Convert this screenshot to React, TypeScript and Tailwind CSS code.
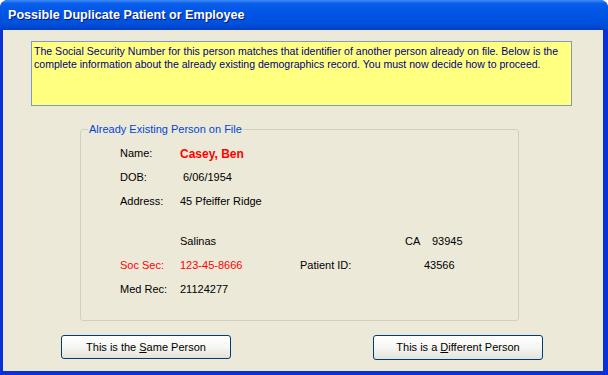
export default function App() {
  const font = "font-['Liberation_Sans',Arial,sans-serif]";

  return (
    <div className={`w-[608px] h-[375px] flex flex-col rounded-t-[8px] bg-[#0831D9] overflow-hidden ${font}`}>
      {/* title bar */}
      <div className="h-[30px] shrink-0 flex items-center pl-[8px] bg-[linear-gradient(180deg,#3D8CF9_0%,#0A5DEA_12%,#0055E5_45%,#0050DC_80%,#003FC4_100%)]">
        <span className="text-white font-bold text-[12.6px] [text-shadow:1px_1px_0_#0A1883]">
          Possible Duplicate Patient or Employee
        </span>
      </div>

      {/* client area */}
      <div className="flex-1 ml-[3px] mr-[5px] mb-[4px] bg-[#ECE9D8] flex flex-col">
        <div className="ml-[28px] mt-[11px] w-[541px] h-[65px] bg-[#FFFF80] border border-[#7F9DB9] px-[2px] pt-[3px] text-[10.55px] leading-[13px] text-[#000080] whitespace-nowrap">
          The Social Security Number for this person matches that identifier of another person already on file. Below is the
          <br />
          complete information about the already existing demographics record. You must now decide how to proceed.
        </div>

        <fieldset className="ml-[77px] mt-[15px] w-[439px] h-[200px] border border-[#D0D0BF] rounded-[3px] px-0 pb-0">
          <legend className="ml-[7px] px-[1px] text-[11px] text-[#0046D5]">Already Existing Person on File</legend>

          <div className="pl-[39px] pt-[4px] text-[11px] text-black flex flex-col">
            <div className="h-[24px] flex items-center">
              <span className="w-[60px]">Name:</span>
              <span className="font-bold text-[12px] text-[#FF0000]">Casey, Ben</span>
            </div>
            <div className="h-[24px] flex items-center">
              <span className="w-[63px]">DOB:</span>
              <span>6/06/1954</span>
            </div>
            <div className="h-[24px] flex items-center">
              <span className="w-[60px]">Address:</span>
              <span>45 Pfeiffer Ridge</span>
            </div>
            <div className="h-[24px] mt-[16px] flex items-center">
              <span className="w-[60px]" />
              <span className="w-[225px]">Salinas</span>
              <span className="w-[27px]">CA</span>
              <span>93945</span>
            </div>
            <div className="h-[24px] flex items-center text-[#FF0000]">
              <span className="w-[60px]">Soc Sec:</span>
              <span className="w-[120px]">123-45-8666</span>
              <span className="w-[124px] text-black">Patient ID:</span>
              <span className="text-black">43566</span>
            </div>
            <div className="h-[24px] flex items-center">
              <span className="w-[60px]">Med Rec:</span>
              <span>21124277</span>
            </div>
          </div>
        </fieldset>

        <div className="mt-[14px] flex">
          <button className="ml-[58px] w-[170px] h-[24px] rounded-[3px] border border-[#003C74] bg-[linear-gradient(180deg,#FFFFFF_0%,#F6F6F3_50%,#E3E2DA_100%)] text-[11px] text-black">
            This is the <span className="underline">S</span>ame Person
          </button>
          <button className="ml-[142px] w-[170px] h-[25px] rounded-[3px] border border-[#003C74] bg-[linear-gradient(180deg,#FFFFFF_0%,#F6F6F3_50%,#E3E2DA_100%)] text-[11px] text-black">
            This is a <span className="underline">D</span>ifferent Person
          </button>
        </div>
      </div>
    </div>
  );
}
